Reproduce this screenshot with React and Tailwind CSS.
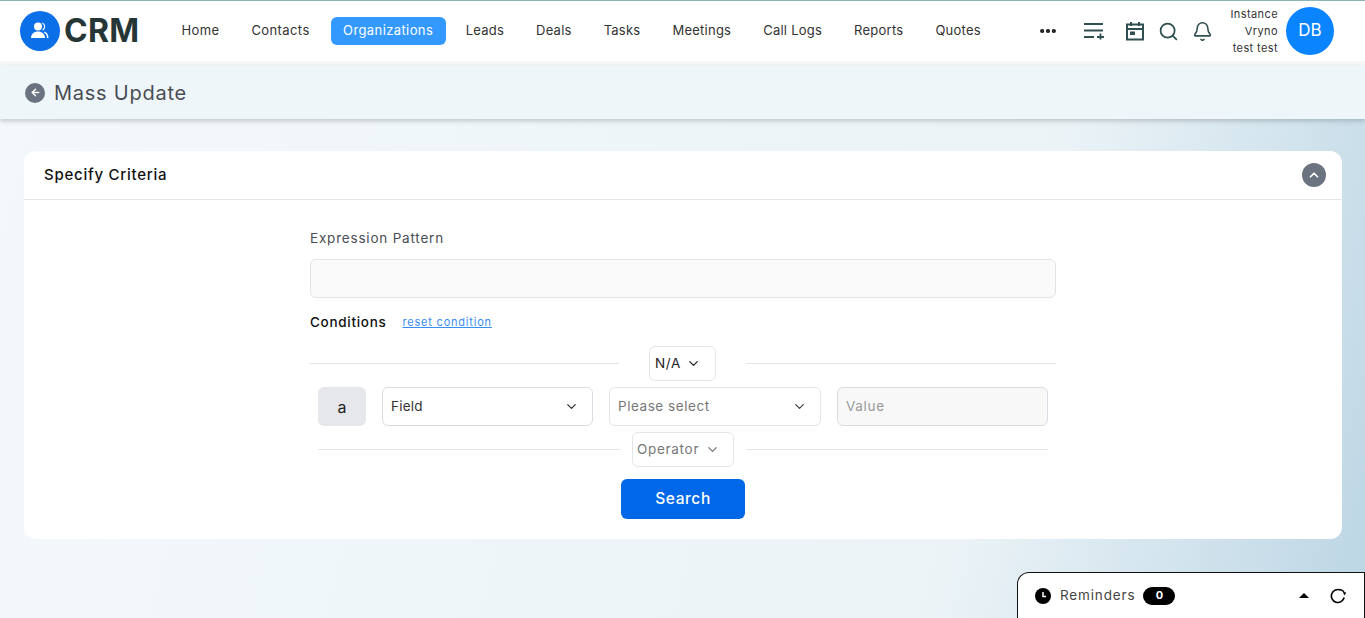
import React from 'react';
import { ChevronDown, ChevronUp, ArrowLeft, Search, Bell, MoreHorizontal } from 'lucide-react';

const navItems = ['Home', 'Contacts', 'Organizations', 'Leads', 'Deals', 'Tasks', 'Meetings', 'Call Logs', 'Reports', 'Quotes'];

export default function App() {
  return (
    <div className="relative h-[618px] overflow-hidden bg-[linear-gradient(105deg,#f3f8fb_0%,#ebf3f7_72%,#bcd6e4_100%)] font-['Inter',sans-serif] text-[#222]">
      <Header />
      <div className="h-[5px] bg-[#f6f7f7]" />
      <div className="bg-[#eff6fa] h-[53px] flex items-center pl-[25px] shadow-[0_2px_5px_rgba(0,0,0,0.2)]">
        <span className="w-5 h-5 rounded-full bg-[#6b7280] flex items-center justify-center">
          <ArrowLeft size={11} strokeWidth={3} className="text-white" />
        </span>
        <h1 className="ml-[9px] text-[20px] tracking-[0.75px] text-[#4a4d55]">Mass Update</h1>
      </div>
      <div className="mx-6 mt-8 w-[1318px] h-[388px] bg-white rounded-xl">
        <div className="h-[49px] border-b border-[#e3e5e8] flex items-center justify-between pl-5 pr-4">
          <h2 className="text-[15px] font-medium tracking-[0.75px] text-[#111]">Specify Criteria</h2>
          <span className="w-6 h-6 rounded-full bg-[#6b7280] flex items-center justify-center">
            <ChevronUp size={14} strokeWidth={3} className="text-white" />
          </span>
        </div>
        <CriteriaForm />
      </div>
      <Reminders />
    </div>
  );
}

function Header() {
  return (
    <div className="h-[61px] bg-white border-t border-[#8fb5b9] flex items-center">
      <div className="ml-5 w-10 h-10 rounded-full bg-[#0b6fe8] flex items-center justify-center">
        <svg width="22" height="22" viewBox="0 0 22 22" fill="white">
          <circle cx="9" cy="6.5" r="4" />
          <path d="M2 18c0-4 3-6.5 7-6.5s7 2.5 7 6.5z" />
          <path d="M13.5 2.5a4.5 4.5 0 0 1 .5 8l-.8-.8a3.5 3.5 0 0 0 0-6.2zM15.5 11.5c2.5.8 4 3.2 4 6.5h-1.5c0-2.5-1-4.5-3-5.5z" />
        </svg>
      </div>
      <span className="ml-1 text-[32px] font-bold text-[#263636] leading-none tracking-[0.3px]">CRM</span>
      <nav className="flex items-center ml-[26px]">
        {navItems.map(item => (
          <a
            key={item}
            className={item === 'Organizations'
              ? 'h-7 ml-[21px] mr-[20px] rounded-md bg-[#3399ff] text-white text-[13px] tracking-[0.4px] flex items-center w-[115px] justify-center'
              : 'h-7 mx-4 text-[#333] text-[13px] tracking-[0.4px] flex items-center w-fit [&:nth-child(2)]:mr-0 [&:nth-child(4)]:ml-0 [&:nth-child(n+4)]:tracking-[0.24px]'}
          >
            {item}
          </a>
        ))}
      </nav>
      <div className="flex-1" />
      <MoreHorizontal size={20} strokeWidth={3} className="text-[#111] mr-[25px]" />
      <svg width="22" height="18" viewBox="0 0 22 18" fill="none" stroke="#2f4f50" strokeWidth="1.8" className="mr-[20px]">
        <path d="M1 2h19M1 8.5h19M1 15h10M14 15h7M17.5 11.5v6" />
      </svg>
      <svg width="20" height="20" viewBox="0 0 20 20" fill="none" stroke="#2f4f50" strokeWidth="2" className="mr-[13px]">
        <rect x="2" y="3.5" width="16" height="15" />
        <path d="M2 8h16M6 1v4M14 1v4" />
        <rect x="5" y="10.5" width="5" height="3.5" fill="#2f4f50" stroke="none" />
      </svg>
      <Search size={21} strokeWidth={2} className="text-[#2f4f50] mr-[13px]" />
      <Bell size={21} strokeWidth={1.8} className="text-[#2f4f50] mr-[18px]" />
      <div className="text-right text-[11px] tracking-[0.4px] leading-[17px] text-[#333] mr-2">
        <div>Instance</div>
        <div>Vryno</div>
        <div>test test</div>
      </div>
      <div className="w-12 h-12 rounded-full bg-[#0a84ff] text-white text-[17px] flex items-center justify-center mr-[31px]">DB</div>
    </div>
  );
}

function CriteriaForm() {
  return (
    <div className="w-[746px] ml-[286px] pt-[28px]">
      <label className="block text-[13.5px] tracking-[0.8px] text-[#4a4d55] leading-5">Expression Pattern</label>
      <div className="mt-[11px] h-[39px] rounded-md border border-[#e2e4e8] bg-[#fafafa]" />
      <div className="mt-[14px] flex items-center h-5">
        <span className="text-[13.5px] font-medium tracking-[0.7px] text-[#111]">Conditions</span>
        <a className="ml-4 text-[11px] tracking-[0.8px] text-[#3b8df0] underline">reset condition</a>
      </div>
      <div className="mt-[14px] flex items-center h-[35px]">
        <div className="w-[309px] border-t border-[#e3e5e8]" />
        <div className="ml-[30px] w-[67px] h-[35px] rounded-md border border-[#e3e5e8] bg-white flex items-center justify-between pl-[5px] pr-[14px] text-[13.5px] tracking-[0.6px] text-[#222]">
          N/A <ChevronDown size={15} />
        </div>
        <div className="ml-[30px] flex-1 border-t border-[#e3e5e8]" />
      </div>
      <div className="mt-[6px] ml-2 w-[730px] flex items-center gap-4 h-[39px]">
        <div className="w-12 h-[39px] rounded-md bg-[#e5e7eb] flex items-center justify-center text-[16px] text-[#222]">a</div>
        <div className="w-[211px] h-[39px] rounded-md border border-[#d9dde3] bg-white flex items-center justify-between pl-2 pr-[13px] text-[13.5px] tracking-[0.2px] text-[#333]">
          Field <ChevronDown size={15} />
        </div>
        <div className="w-[212px] h-[39px] rounded-md border border-[#e3e5e8] bg-white flex items-center justify-between pl-2 pr-[13px] text-[13.5px] tracking-[0.55px] text-[#777]">
          Please select <ChevronDown size={15} className="text-[#444]" />
        </div>
        <div className="w-[211px] h-[39px] rounded-md border border-[#d9dde3] bg-[#f8f8f8] flex items-center pl-2 text-[13.5px] tracking-[0.7px] text-[#999]">Value</div>
      </div>
      <div className="mt-[6px] ml-2 w-[730px] flex items-center h-[35px]">
        <div className="w-[302px] border-t border-[#e3e5e8]" />
        <div className="ml-3 w-[102px] h-[35px] rounded-md border border-[#e3e5e8] bg-white flex items-center justify-between pl-1 pr-[13px] text-[13.5px] tracking-[0.7px] text-[#777]">
          Operator <ChevronDown size={15} />
        </div>
        <div className="ml-3 flex-1 border-t border-[#e3e5e8]" />
      </div>
      <button className="block mt-3 mx-auto w-[124px] h-10 rounded-md bg-[#0068e8] text-white text-[15.5px] tracking-[0.6px] font-medium">Search</button>
    </div>
  );
}

function Reminders() {
  return (
    <div className="absolute right-0 bottom-0 w-[348px] h-[46px] bg-white border-t border-l border-r border-[#111] rounded-tl-xl flex items-center pl-[17px] pr-[17px]">
      <svg width="16" height="16" viewBox="0 0 16 16">
        <circle cx="8" cy="8" r="8" fill="#000" />
        <path d="M8 4v4.5h3" stroke="white" strokeWidth="1.5" fill="none" />
      </svg>
      <span className="ml-[9px] text-[13.5px] tracking-[0.85px] text-[#444]">Reminders</span>
      <span className="ml-2 w-8 h-[18px] rounded-full bg-black text-white text-[11px] font-bold flex items-center justify-center">0</span>
      <div className="flex-1" />
      <span className="w-0 h-0 border-x-[5px] border-x-transparent border-b-[5px] border-b-black mr-[22px]" />
      <svg width="16" height="16" viewBox="0 0 16 16" fill="none" stroke="#000" strokeWidth="1.6" className="translate-x-[-1px]">
        <path d="M14.2 9.5A6.5 6.5 0 1 1 10.5 2" />
        <path d="M10 1.5c2.5.5 4 2 4.500 4.500l1.300-1.500" strokeWidth="1.4" />
      </svg>
    </div>
  );
}
